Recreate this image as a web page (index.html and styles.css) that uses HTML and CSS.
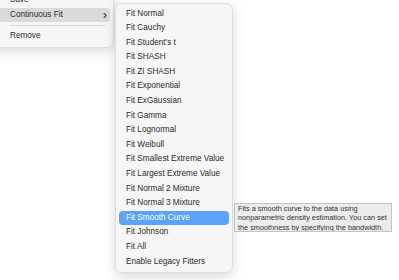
FILE: index.html
```html
<!DOCTYPE html>
<html lang="en">
<head>
    <meta charset="UTF-8">
    <title>Continuous Fit menu</title>
    <link rel="stylesheet" href="styles.css">
</head>
<body>

    <div class="menu main-menu">
        <div class="item">Save</div>
        <div class="item active">Continuous Fit <span class="chevron">&#8250;</span></div>
        <div class="separator"></div>
        <div class="item">Remove</div>
    </div>

    <div class="menu sub-menu">
        <div class="item">Fit Normal</div>
        <div class="item">Fit Cauchy</div>
        <div class="item">Fit Student's t</div>
        <div class="item">Fit SHASH</div>
        <div class="item">Fit ZI SHASH</div>
        <div class="item">Fit Exponential</div>
        <div class="item">Fit ExGaussian</div>
        <div class="item">Fit Gamma</div>
        <div class="item">Fit Lognormal</div>
        <div class="item">Fit Weibull</div>
        <div class="item">Fit Smallest Extreme Value</div>
        <div class="item">Fit Largest Extreme Value</div>
        <div class="item">Fit Normal 2 Mixture</div>
        <div class="item">Fit Normal 3 Mixture</div>
        <div class="item selected">Fit Smooth Curve</div>
        <div class="item">Fit Johnson</div>
        <div class="item">Fit All</div>
        <div class="item">Enable Legacy Fitters</div>
    </div>

    <div class="tooltip">
        Fits a smooth curve to the data using<br>
        nonparametric density estimation. You can set<br>
        the smoothness by specifying the bandwidth.
    </div>

</body>
</html>
```

FILE: styles.css
```css
body {
    margin: 0;
    background-color: #fff;
    font-family: "Liberation Sans", Arial, sans-serif;
    color: #2b2b2b;
    width: 399px;
    height: 280px;
    overflow: hidden;
    position: relative;
}
.menu {
    position: absolute;
    background-color: #f6f6f6;
    border: 1px solid #dedede;
    border-radius: 7px;
    box-shadow: 0 3px 12px rgba(0, 0, 0, 0.16);
    box-sizing: border-box;
}
.item {
    height: 14.6px;
    line-height: 14.6px;
    font-size: 8.2px;
    padding: 0 7px;
    border-radius: 4px;
    white-space: nowrap;
}
.main-menu {
    left: -20px;
    top: -11px;
    width: 134px;
    padding: 3px 3px 4px 3px;
}
.main-menu .item {
    padding-left: 26px;
    padding-right: 3px;
    display: flex;
    justify-content: space-between;
}
.main-menu .active {
    background-color: #dadada;
}
.chevron {
    font-size: 13px;
    line-height: 13px;
}
.separator {
    height: 1px;
    background-color: #dcdcdc;
    margin: 2.5px 4px 3px 26px;
}
.sub-menu {
    left: 115px;
    top: 3px;
    width: 118px;
    padding: 2.5px 3px;
}
.sub-menu .selected {
    background-color: #5ba2f8;
    color: #fff;
}
.tooltip {
    position: absolute;
    left: 234px;
    top: 203px;
    width: 158px;
    height: 29px;
    box-sizing: border-box;
    background-color: #ececec;
    border: 1px solid #c4c4c4;
    font-size: 7.3px;
    line-height: 9.4px;
    padding: 0 3px;
    color: #333;
    white-space: nowrap;
    overflow: hidden;
}
```
